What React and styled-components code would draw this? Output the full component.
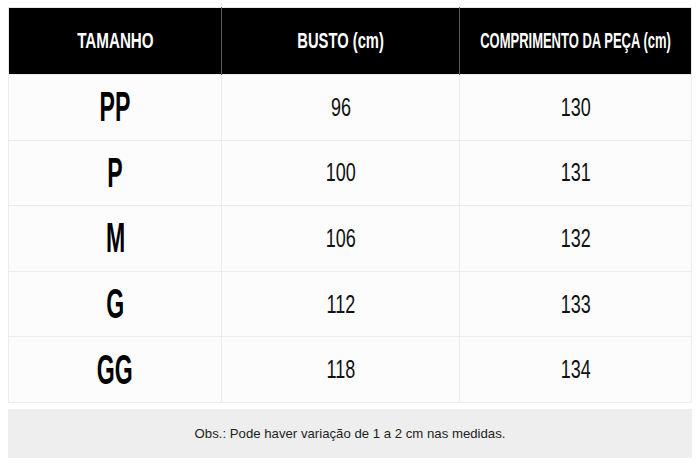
import React from "react";
import styled, { createGlobalStyle } from "styled-components";

const GlobalStyle = createGlobalStyle`
  body {
    margin: 0;
    background: #ffffff;
    font-family: "Liberation Sans", Arial, sans-serif;
  }
`;

const Page = styled.div`
  padding: 7px 8px 10px;
  display: flex;
  flex-direction: column;
  gap: 6px;
`;

const Table = styled.table`
  width: 100%;
  border-collapse: collapse;
  table-layout: fixed;
  border: 1px solid #e8e8e8;
`;

const HeadCell = styled.th`
  background: #000000;
  color: #ffffff;
  height: 66px;
  padding: 0;
  vertical-align: middle;
  border-left: 1px solid #5a5a5a;
  &:first-child {
    border-left: none;
  }
`;

const Cell = styled.td`
  background: #fcfcfc;
  height: 65.6px;
  padding: 0;
  vertical-align: middle;
  border: 1px solid #ececec;
  box-sizing: border-box;
`;

const Center = styled.div`
  display: flex;
  justify-content: center;
  align-items: center;
`;

// condensed look: Liberation Sans squeezed horizontally
const Narrow = styled.span`
  display: inline-block;
  flex-shrink: 0;
  font-family: "Liberation Sans", Arial, sans-serif;
  white-space: nowrap;
  transform-origin: center;
`;

const HeadText = styled(Narrow)`
  font-size: 22px;
  font-weight: 700;
  transform: scaleX(${(p) => p.$sx || 0.69});
`;

const SizeText = styled(Narrow)`
  font-size: 42px;
  font-weight: 700;
  color: #000;
  transform: scaleX(0.55);
`;

const NumText = styled(Narrow)`
  font-size: 25px;
  font-weight: 400;
  color: #111;
  transform: scaleX(0.72);
`;

const Note = styled.div`
  background: #eeeeee;
  height: 49px;
  display: flex;
  align-items: center;
  justify-content: center;
  font-size: 13.2px;
  color: #222222;
`;

const rows = [
  ["PP", "96", "130"],
  ["P", "100", "131"],
  ["M", "106", "132"],
  ["G", "112", "133"],
  ["GG", "118", "134"],
];

export default function App() {
  return (
    <>
      <GlobalStyle />
      <Page>
        <Table>
          <colgroup>
            <col style={{ width: "213px" }} />
            <col style={{ width: "238px" }} />
            <col />
          </colgroup>
          <thead>
            <tr>
              <HeadCell><Center><HeadText>TAMANHO</HeadText></Center></HeadCell>
              <HeadCell><Center><HeadText $sx={0.67}>BUSTO (cm)</HeadText></Center></HeadCell>
              <HeadCell><Center><HeadText $sx={0.59}>COMPRIMENTO DA PEÇA (cm)</HeadText></Center></HeadCell>
            </tr>
          </thead>
          <tbody>
            {rows.map(([size, busto, comp]) => (
              <tr key={size}>
                <Cell><Center><SizeText>{size}</SizeText></Center></Cell>
                <Cell><Center><NumText>{busto}</NumText></Center></Cell>
                <Cell><Center><NumText>{comp}</NumText></Center></Cell>
              </tr>
            ))}
          </tbody>
        </Table>
        <Note>Obs.: Pode haver variação de 1 a 2 cm nas medidas.</Note>
      </Page>
    </>
  );
}
